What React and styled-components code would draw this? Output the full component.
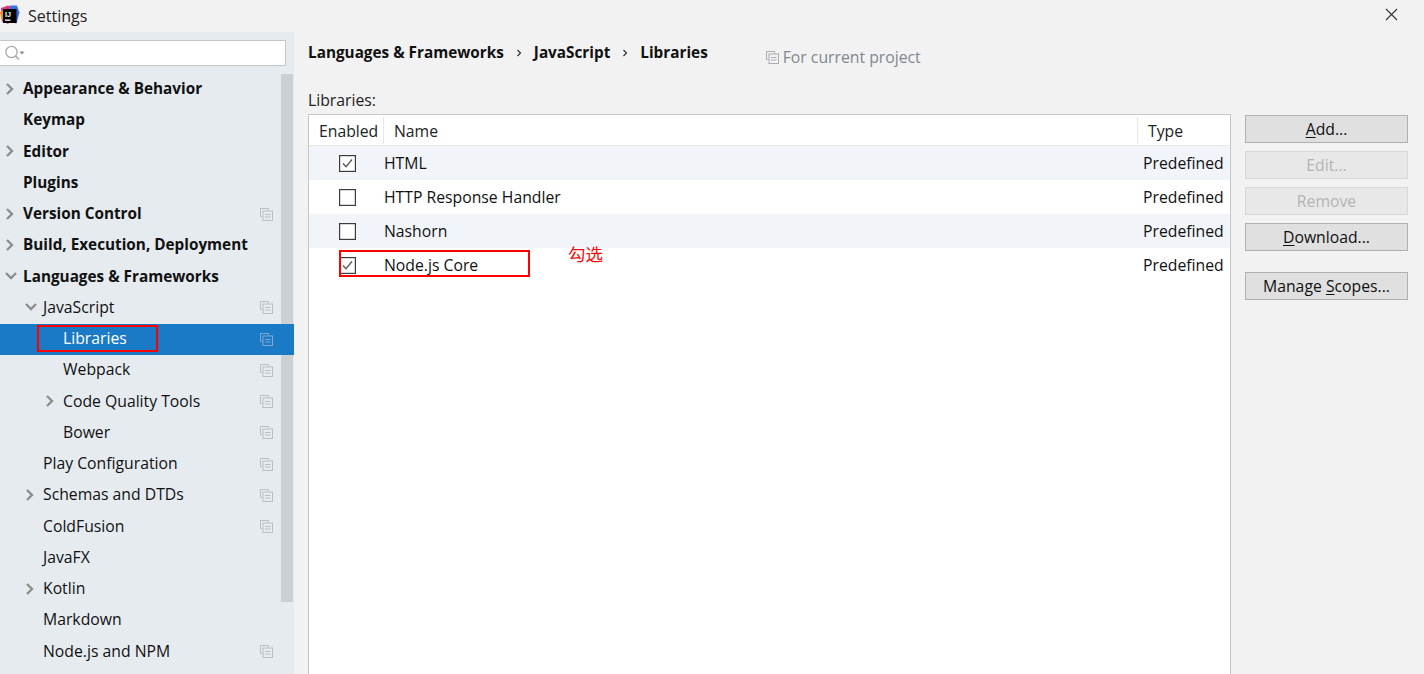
import React from "react";
import styled, { createGlobalStyle } from "styled-components";

const Global = createGlobalStyle`
  html, body { margin: 0; padding: 0; background: #f2f2f2; overflow: hidden; }
  body { font-family: "Open Sans", "Noto Sans CJK SC", sans-serif; }
`;
const Frame = styled.div`
  width: 1424px; height: 674px; overflow: hidden; display: flex; flex-direction: column;
  background: #f2f2f2; color: #111; font-size: 15.75px;
`;
const TitleBar = styled.div`
  height: 32px; flex: none; display: flex; align-items: center; position: relative;
`;
const Logo = styled.svg`
  width: 20px; height: 20px; flex: none; margin: 0 8px 0 0; position: relative; top: -1px;
`;
const Title = styled.span`
  font-size: 16px; color: #222; position: relative; top: 0;
`;
const CloseIcon = styled.svg`
  position: absolute; left: 1385px; top: 8px; width: 13px; height: 13px;
`;
const Body = styled.div`
  flex: 1; display: flex; min-height: 0;
`;
const Sidebar = styled.aside`
  width: 294px; flex: none; background: #e6ebf0; position: relative; padding-top: 8px;
`;
const SearchBox = styled.div`
  height: 24px; width: 280px; margin-left: -1px; background: #fff; border: 1px solid #c6c6c6;
  display: flex; align-items: center; padding-left: 5px; box-sizing: content-box;
`;
const Tree = styled.div`
  margin-top: 8px; display: flex; flex-direction: column;
`;
const Row = styled.div`
  height: 31.25px; box-sizing: border-box; padding-bottom: 3px; display: flex; align-items: center; position: relative;
  padding-left: ${p => p.$indent}px;
  font-weight: ${p => (p.$bold ? 700 : 400)};
  font-size: ${p => (p.$bold ? "15.3px" : "15.75px")};
  background: ${p => (p.$selected ? "#1a7ac5" : "transparent")};
  color: ${p => (p.$selected ? "#fff" : "#111")};
`;
const Chevron = styled.svg`
  position: absolute; left: ${p => p.$left}px; top: 50%; margin-top: -7px; width: 12px; height: 12px;
`;
const CopyMark = styled.svg`
  position: absolute; left: 260px; top: 50%; margin-top: -7px; width: 13px; height: 13px;
`;
const ScrollTrack = styled.div`
  position: absolute; left: 281px; top: 42px; width: 12px; height: 528px; background: #c8cdd2; opacity: .9;
`;
const Mark = styled.div`
  position: absolute; border: 2px solid #f00; box-sizing: border-box; pointer-events: none;
`;
const SideMark = styled(Mark)`
  left: 37px; top: 1px; width: 121px; height: 27px;
`;
const Main = styled.main`
  flex: 1; padding: 0 16px 0 14px; display: flex; flex-direction: column; min-width: 0;
`;
const Crumbs = styled.div`
  height: 42px; display: flex; align-items: flex-start; padding-top: 9px; box-sizing: border-box;
  font-weight: 700; font-size: 15.3px;
`;
const Crumb = styled.span`
  line-height: 22px;
`;
const Sep = styled.svg`
  width: 8px; height: 8px; margin: 8px 11px 0 11px;
`;
const Scope = styled.span`
  display: flex; align-items: center; gap: 4px; color: #808890; font-weight: 400; font-size: 15.75px;
  margin: 5px 0 0 58px; line-height: 22px;
`;
const ScopeIcon = styled.svg`
  width: 13px; height: 13px;
`;
const Caption = styled.div`
  height: 40px; display: flex; align-items: flex-end; padding-bottom: 4px; box-sizing: border-box; line-height: 20px; color: #222;
`;
const Content = styled.div`
  flex: 1; display: flex; gap: 14px; min-height: 0;
`;
const Table = styled.div`
  width: 923px; flex: none; background: #fff; border: 1px solid #c6c6c6; border-bottom: none; box-sizing: border-box;
  height: 560px; position: relative;
`;
const Grid = styled.div`
  display: grid; grid-template-columns: 75px 1fr 92px; align-items: center;
`;
const Head = styled(Grid)`
  height: 30px; border-bottom: 1px solid #e6e6e6; box-sizing: content-box; color: #222;
`;
const HeadCell = styled.div`
  height: 27px; display: flex; align-items: center; padding: 1px 0 0 ${p => p.$pad}px;
  border-right: ${p => (p.$divide ? "1px solid #e6e6e6" : "none")}; box-sizing: border-box;
`;
const DataRow = styled(Grid)`
  height: 34px; position: relative; background: ${p => (p.$alt ? "#f1f4f9" : "#fff")};
`;
const CheckCell = styled.div`
  display: flex; padding-left: 30px;
`;
const Box = styled.svg`
  width: 17px; height: 17px; display: block;
`;
const NameCell = styled.div`
  padding-left: 0; color: #111;
`;
const TypeCell = styled.div`
  padding-left: 5px; color: #111;
`;
const RowMark = styled(Mark)`
  left: 30px; top: 2px; width: 191px; height: 27px;
`;
const Note = styled.span`
  position: absolute; left: 259px; top: -6px; color: #f01010; font-size: 17.5px; line-height: 24px;
  font-family: "Noto Sans CJK SC", sans-serif;
`;
const Buttons = styled.div`
  width: 163px; flex: none; display: flex; flex-direction: column;
`;
const Btn = styled.div`
  height: 28px; box-sizing: border-box; flex: none; display: flex; align-items: center; justify-content: center;
  background: ${p => (p.$off ? "#e8e8e8" : "#e0e0e0")};
  border: 1px solid ${p => (p.$off ? "#d8d8d8" : "#b0b0b0")};
  color: ${p => (p.$off ? "#b4b4b4" : "#111")};
  margin-top: ${p => p.$gap}px;
`;
const Key = styled.span`
  text-decoration: underline; text-underline-offset: 2px;
`;

const rows = [
  { t: "Appearance & Behavior", i: 23, b: 1, c: "r", cl: 4 },
  { t: "Keymap", i: 23, b: 1 },
  { t: "Editor", i: 23, b: 1, c: "r", cl: 4 },
  { t: "Plugins", i: 23, b: 1 },
  { t: "Version Control", i: 23, b: 1, c: "r", cl: 4, m: 1 },
  { t: "Build, Execution, Deployment", i: 23, b: 1, c: "r", cl: 4 },
  { t: "Languages & Frameworks", i: 23, b: 1, c: "d", cl: 5 },
  { t: "JavaScript", i: 43, c: "d", cl: 25, m: 1 },
  { t: "Libraries", i: 63, m: 1, s: 1 },
  { t: "Webpack", i: 63, m: 1 },
  { t: "Code Quality Tools", i: 63, c: "r", cl: 44, m: 1 },
  { t: "Bower", i: 63, m: 1 },
  { t: "Play Configuration", i: 43, m: 1 },
  { t: "Schemas and DTDs", i: 43, c: "r", cl: 24, m: 1 },
  { t: "ColdFusion", i: 43, m: 1 },
  { t: "JavaFX", i: 43 },
  { t: "Kotlin", i: 43, c: "r", cl: 24 },
  { t: "Markdown", i: 43 },
  { t: "Node.js and NPM", i: 43, m: 1 },
];

const libs = [
  { n: "HTML", on: true, alt: true },
  { n: "HTTP Response Handler", on: false },
  { n: "Nashorn", on: false, alt: true },
  { n: "Node.js Core", on: true, mark: true },
];

const Copy = ({ as: C = CopyMark, color = "#b9bfc5" }) => (
  <C viewBox="0 0 13 13" fill="none" stroke={color} strokeWidth="1">
    <path d="M8.5 2.5V.5H.5v8h2" />
    <rect x="3" y="3" width="9.5" height="9.5" />
    <path d="M5 6.5h5.5M5 9h5.5" />
  </C>
);

const Check = ({ on }) => (
  <Box viewBox="0 0 17 17">
    <rect x=".6" y=".6" width="15.8" height="15.8" fill="#fff" stroke="#3c3c3c" strokeWidth="1.2" />
    {on && <path d="M4 8.5l3 3.2L13 4.5" fill="none" stroke="#555" strokeWidth="1.3" />}
  </Box>
);

export default function App() {
  return (
    <Frame>
      <Global />
      <TitleBar>
        <Logo viewBox="0 0 20 20">
          <path d="M1 3L8 0.5l5 2.5-3 10-8 4z" fill="#e0337e" />
          <path d="M10 0.5h7l2.5 7-3 11-8-2z" fill="#3a6fe0" />
          <path d="M0 7l4-2 2 7-4.5 3z" fill="#f58a1f" />
          <path d="M3 16l5 3 2-3z" fill="#e0337e" />
          <rect x="3" y="4" width="13.5" height="14" fill="#000" />
          <rect x="5" y="14.5" width="5.5" height="1.3" fill="#fff" />
          <text x="5" y="11.5" fontSize="7" fontWeight="700" fill="#fff" fontFamily="Liberation Sans, sans-serif">IJ</text>
        </Logo>
        <Title>Settings</Title>
        <CloseIcon viewBox="0 0 13 13" stroke="#333" strokeWidth="1.1"><path d="M1 1l11 11M12 1L1 12" /></CloseIcon>
      </TitleBar>
      <Body>
        <Sidebar>
          <SearchBox>
            <svg width="22" height="16" viewBox="0 0 22 16" fill="none">
              <circle cx="6.5" cy="7" r="5.6" stroke="#a0a5aa" strokeWidth="1.2" />
              <path d="M10.6 11L14 14.5" stroke="#a0a5aa" strokeWidth="1.4" />
              <path d="M14.5 6.5h5l-2.5 3z" fill="#8a8f94" />
            </svg>
          </SearchBox>
          <ScrollTrack />
          <Tree>
            {rows.map(r => (
              <Row key={r.t} $indent={r.i} $bold={r.b} $selected={r.s}>
                {r.c && (
                  <Chevron $left={r.cl} viewBox="0 0 12 12" fill="none" stroke="#8c8c8c" strokeWidth="2.3">
                    <path d={r.c === "r" ? "M3 1L8 6l-5 5" : "M1 3l5 5 5-5"} />
                  </Chevron>
                )}
                {r.t}
                {r.m && <Copy color={r.s ? "#7fa9cf" : "#b9bfc5"} />}
                {r.s && <SideMark />}
              </Row>
            ))}
          </Tree>
        </Sidebar>
        <Main>
          <Crumbs>
            <Crumb>Languages &amp; Frameworks</Crumb>
            <Sep viewBox="0 0 8 8" fill="none" stroke="#333" strokeWidth="1.2"><path d="M2.5 1L5.5 4l-3 3" /></Sep>
            <Crumb>JavaScript</Crumb>
            <Sep viewBox="0 0 8 8" fill="none" stroke="#333" strokeWidth="1.2"><path d="M2.5 1L5.5 4l-3 3" /></Sep>
            <Crumb>Libraries</Crumb>
            <Scope><Copy as={ScopeIcon} color="#a8aeb4" />For current project</Scope>
          </Crumbs>
          <Caption>Libraries:</Caption>
          <Content>
            <Table>
              <Head>
                <HeadCell $pad={10} $divide>Enabled</HeadCell>
                <HeadCell $pad={10} $divide>Name</HeadCell>
                <HeadCell $pad={10}>Type</HeadCell>
              </Head>
              {libs.map(l => (
                <DataRow key={l.n} $alt={l.alt}>
                  <CheckCell><Check on={l.on} /></CheckCell>
                  <NameCell>{l.n}</NameCell>
                  <TypeCell>Predefined</TypeCell>
                  {l.mark && <><RowMark /><Note>勾选</Note></>}
                </DataRow>
              ))}
            </Table>
            <Buttons>
              <Btn $gap={1}><span><Key>A</Key>dd...</span></Btn>
              <Btn $gap={8} $off>Edit...</Btn>
              <Btn $gap={8} $off>Remove</Btn>
              <Btn $gap={8}><span><Key>D</Key>ownload...</span></Btn>
              <Btn $gap={21}><span>Manage <Key>S</Key>copes...</span></Btn>
            </Buttons>
          </Content>
        </Main>
      </Body>
    </Frame>
  );
}
